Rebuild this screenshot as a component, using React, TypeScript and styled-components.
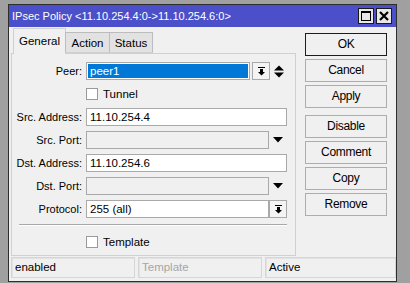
import React from "react";
import styled, { createGlobalStyle } from "styled-components";

const GlobalStyle = createGlobalStyle`
  html, body {
    margin: 0;
    padding: 0;
    background: #a0a0a0;
  }
  body {
    font-family: "Liberation Sans", Arial, sans-serif;
    font-size: 11px;
    color: #000;
  }
  * {
    box-sizing: border-box;
  }
`;

const Window = styled.div`
  margin: 4px 0 0 8px;
  width: 389px;
  height: 278px;
  border: 1px solid #2e2e2e;
  background: #f0f0f0;
  display: flex;
  flex-direction: column;
`;

const TitleBar = styled.div`
  height: 22px;
  background: #4b4fca;
  color: #fff;
  font-size: 11px;
  display: flex;
  align-items: center;
  justify-content: space-between;
  padding: 0 4px 0 3px;
`;

const TitleButtons = styled.div`
  display: flex;
  gap: 2px;
`;

const TitleButton = styled.div`
  width: 16px;
  height: 16px;
  background: #e8e8e8;
  border: 1px solid #1a1a1a;
  display: flex;
  align-items: center;
  justify-content: center;
`;

const Body = styled.div`
  display: flex;
  padding: 1px 0 0 2px;
`;

const LeftPane = styled.div`
  width: 285px;
  display: flex;
  flex-direction: column;
`;

const TabRow = styled.div`
  height: 25px;
  display: flex;
  align-items: flex-end;
  padding-left: 2px;
  position: relative;
  z-index: 1;
`;

const Tab = styled.div<{ $active?: boolean; $w: number }>`
  width: ${(p) => p.$w}px;
  height: ${(p) => (p.$active ? "26px" : "21px")};
  margin-bottom: ${(p) => (p.$active ? "-1px" : "0")};
  padding-top: ${(p) => (p.$active ? "6px" : "4px")};
  text-align: center;
  background: ${(p) => (p.$active ? "#f0f0f0" : "#e2e2e2")};
  border: 1px solid ${(p) => (p.$active ? "#d0d0d0" : "#bcbcbc")};
  border-bottom: ${(p) => (p.$active ? "none" : "1px solid #d0d0d0")};
  margin-right: -1px;
  font-size: 11.5px;
`;

const Panel = styled.div`
  height: 203px;
  border: 1px solid #d0d0d0;
  padding: 8px 0 0 0;
  display: flex;
  flex-direction: column;
  gap: 5px;
`;

const Row = styled.div`
  display: grid;
  grid-template-columns: 70px 201px;
  column-gap: 4px;
  height: 18px;
  align-items: center;
`;

const Label = styled.div`
  text-align: right;
  font-size: 11px;
`;

const FieldLine = styled.div`
  display: flex;
  align-items: center;
  height: 18px;
`;

const Input = styled.div<{ $disabled?: boolean; $selected?: boolean; $w?: number }>`
  height: 18px;
  width: ${(p) => (p.$w ? `${p.$w}px` : "100%")};
  flex: none;
  border: 1px solid #a9a9a9;
  background: ${(p) => (p.$selected ? "#0078d7" : p.$disabled ? "#f0f0f0" : "#fff")};
  color: ${(p) => (p.$selected ? "#fff" : "#000")};
  box-shadow: ${(p) => (p.$selected ? "inset 0 0 0 1px #fff" : "none")};
  padding: 1px 0 0 3px;
  font-size: 11.5px;
  line-height: 14px;
  white-space: nowrap;
  overflow: hidden;
`;

const DropButton = styled.div<{ $ml?: number }>`
  width: 18px;
  height: 18px;
  flex: none;
  margin-left: ${(p) => p.$ml ?? 0}px;
  border: 1px solid #a9a9a9;
  background: #f4f4f4;
  display: flex;
  align-items: center;
  justify-content: center;
`;

const ArrowSlot = styled.div`
  width: 18px;
  height: 18px;
  flex: none;
  display: flex;
  align-items: center;
  justify-content: center;
`;

const CheckLine = styled.label`
  display: flex;
  align-items: center;
  gap: 5px;
  font-size: 11.5px;
`;

const CheckBox = styled.span`
  width: 12px;
  height: 12px;
  border: 1px solid #9a9a9a;
  background: #fff;
  display: inline-block;
`;

const Separator = styled.div`
  margin: 1px 8px 2px 7px;
  height: 2px;
  border-top: 1px solid #a8a8a8;
  border-bottom: 1px solid #fff;
`;

const ButtonColumn = styled.div`
  margin-left: 9px;
  padding-top: 5px;
  width: 82px;
  display: flex;
  flex-direction: column;
  gap: 3.5px;
`;

const Button = styled.div<{ $default?: boolean; $gapBefore?: boolean }>`
  height: 22.5px;
  border: 1px solid ${(p) => (p.$default ? "#1c1c1c" : "#adadad")};
  background: #f0f0f0;
  display: flex;
  align-items: center;
  justify-content: center;
  font-size: 12px;
  letter-spacing: -0.3px;
  margin-top: ${(p) => (p.$gapBefore ? "4px" : "0")};
`;

const StatusBar = styled.div`
  display: flex;
  gap: 3px;
  padding: 1px 0 0 2px;
`;

const StatusCell = styled.div<{ $w: number; $muted?: boolean }>`
  width: ${(p) => p.$w}px;
  height: 21px;
  border: 1px solid #d6d6d6;
  box-shadow: inset 1px 1px 0 #e2e2e2;
  color: ${(p) => (p.$muted ? "#a6a6a6" : "#000")};
  padding: 3px 0 0 3px;
  font-size: 11.5px;
`;

const DropIcon = () => (
  <svg width="9" height="9" viewBox="0 0 9 9">
    <rect x="1" y="0" width="7" height="1" fill="#000" />
    <path d="M3 2h3v3h2L4.5 8.5 1 5h2z" fill="#000" />
  </svg>
);

const DownIcon = () => (
  <svg width="10" height="6" viewBox="0 0 10 6">
    <path d="M0 0h10L5 5.5z" fill="#000" />
  </svg>
);

const UpDownIcon = () => (
  <svg width="10" height="13" viewBox="0 0 10 13">
    <path d="M0 5.5h10L5 0.5z" fill="#000" />
    <path d="M0 7.5h10L5 12.5z" fill="#000" />
  </svg>
);

const MaxIcon = () => (
  <svg width="10" height="10" viewBox="0 0 10 10">
    <rect x="0.5" y="0.5" width="9" height="9" fill="none" stroke="#000" />
    <rect x="0" y="0" width="10" height="2" fill="#000" />
  </svg>
);

const CloseIcon = () => (
  <svg width="10" height="10" viewBox="0 0 10 10">
    <path d="M1 1l8 8M9 1l-8 8" stroke="#000" strokeWidth="2.2" />
  </svg>
);

const buttons = ["OK", "Cancel", "Apply", "Disable", "Comment", "Copy", "Remove"];

const App: React.FC = () => {
  return (
    <>
      <GlobalStyle />
      <Window>
        <TitleBar>
          <span>IPsec Policy &lt;11.10.254.4:0-&gt;11.10.254.6:0&gt;</span>
          <TitleButtons>
            <TitleButton>
              <MaxIcon />
            </TitleButton>
            <TitleButton>
              <CloseIcon />
            </TitleButton>
          </TitleButtons>
        </TitleBar>
        <Body>
          <LeftPane>
            <TabRow>
              <Tab $active $w={53}>
                General
              </Tab>
              <Tab $w={45}>Action</Tab>
              <Tab $w={44}>Status</Tab>
            </TabRow>
            <Panel>
              <Row>
                <Label>Peer:</Label>
                <FieldLine>
                  <Input $selected $w={164}>peer1</Input>
                  <DropButton $ml={2}>
                    <DropIcon />
                  </DropButton>
                  <ArrowSlot>
                    <UpDownIcon />
                  </ArrowSlot>
                </FieldLine>
              </Row>
              <Row>
                <span />
                <CheckLine>
                  <CheckBox />
                  Tunnel
                </CheckLine>
              </Row>
              <Row>
                <Label>Src. Address:</Label>
                <Input>11.10.254.4</Input>
              </Row>
              <Row>
                <Label>Src. Port:</Label>
                <FieldLine>
                  <Input $disabled $w={183} />
                  <ArrowSlot>
                    <DownIcon />
                  </ArrowSlot>
                </FieldLine>
              </Row>
              <Row>
                <Label>Dst. Address:</Label>
                <Input>11.10.254.6</Input>
              </Row>
              <Row>
                <Label>Dst. Port:</Label>
                <FieldLine>
                  <Input $disabled $w={183} />
                  <ArrowSlot>
                    <DownIcon />
                  </ArrowSlot>
                </FieldLine>
              </Row>
              <Row>
                <Label>Protocol:</Label>
                <FieldLine>
                  <Input $w={183}>255 (all)</Input>
                  <DropButton>
                    <DropIcon />
                  </DropButton>
                </FieldLine>
              </Row>
              <Separator />
              <Row>
                <span />
                <CheckLine>
                  <CheckBox />
                  Template
                </CheckLine>
              </Row>
            </Panel>
          </LeftPane>
          <ButtonColumn>
            {buttons.map((b) => (
              <Button key={b} $default={b === "OK"} $gapBefore={b === "Disable"}>
                {b}
              </Button>
            ))}
          </ButtonColumn>
        </Body>
        <StatusBar>
          <StatusCell $w={124}>enabled</StatusCell>
          <StatusCell $w={124} $muted>
            Template
          </StatusCell>
          <StatusCell $w={131}>Active</StatusCell>
        </StatusBar>
      </Window>
    </>
  );
};

export default App;
